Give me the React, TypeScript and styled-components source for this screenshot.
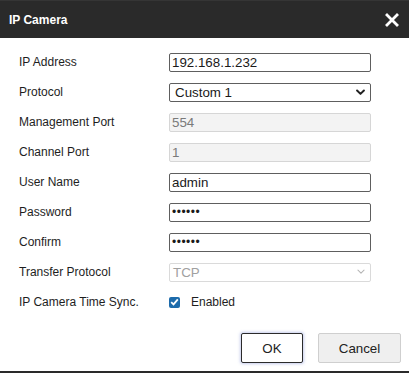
import styled, { createGlobalStyle } from "styled-components"

const GlobalStyle = createGlobalStyle`
  html, body {
    margin: 0;
    padding: 0;
    background: #ffffff;
  }
  body {
    font-family: "Liberation Sans", Arial, sans-serif;
  }
`

type Field =
  | { label: string; kind: "text"; value: string; disabled?: boolean }
  | { label: string; kind: "password"; value: string }
  | { label: string; kind: "select"; value: string; disabled?: boolean }

const fields: Field[] = [
  { label: "IP Address", kind: "text", value: "192.168.1.232" },
  { label: "Protocol", kind: "select", value: "Custom 1" },
  { label: "Management Port", kind: "text", value: "554", disabled: true },
  { label: "Channel Port", kind: "text", value: "1", disabled: true },
  { label: "User Name", kind: "text", value: "admin" },
  { label: "Password", kind: "password", value: "123456" },
  { label: "Confirm", kind: "password", value: "123456" },
  { label: "Transfer Protocol", kind: "select", value: "TCP", disabled: true },
]

const Chevron = ({ disabled }: { disabled?: boolean }) => (
  <svg width={disabled ? 8 : 9} height={disabled ? 6 : 7} viewBox="0 0 10 7">
    <path
      d="M1.2 1.2 L5 5 L8.8 1.2"
      fill="none"
      stroke={disabled ? "#b5b5b5" : "#222"}
      strokeWidth={disabled ? 1.3 : 2.2}
      strokeLinecap="round"
      strokeLinejoin="round"
    />
  </svg>
)

export default function App() {
  return (
    <>
      <GlobalStyle />
      <Dialog>
        <TitleBar>
          <Title>IP Camera</Title>
          <CloseIcon viewBox="0 0 14 14" aria-label="Close">
            <path d="M2 2 L12 12 M12 2 L2 12" stroke="#fff" strokeWidth="2.8" strokeLinecap="square" />
          </CloseIcon>
        </TitleBar>
        <Form>
          {fields.map((f) => (
            <Row key={f.label}>
              <Label>{f.label}</Label>
              {f.kind === "select" ? (
                <SelectBox $disabled={f.disabled}>
                  <SelectText $disabled={f.disabled}>{f.value}</SelectText>
                  <Chevron disabled={f.disabled} />
                </SelectBox>
              ) : (
                <TextInput
                  type={f.kind}
                  defaultValue={f.value}
                  disabled={f.kind === "text" ? f.disabled : false}
                  readOnly
                />
              )}
            </Row>
          ))}
          <Row>
            <Label>IP Camera Time Sync.</Label>
            <CheckWrap>
              <CheckBox>
                <svg width="9" height="8" viewBox="0 0 9 8">
                  <path d="M1.2 4.2 L3.5 6.4 L7.8 1.4" fill="none" stroke="#fff" strokeWidth="1.8" />
                </svg>
              </CheckBox>
              <CheckLabel>Enabled</CheckLabel>
            </CheckWrap>
          </Row>
        </Form>
        <Footer>
          <Button $primary>OK</Button>
          <Button>Cancel</Button>
        </Footer>
      </Dialog>
    </>
  )
}

const Dialog = styled.div`
  width: 409px;
  height: 373px;
  background: #ffffff;
  display: flex;
  flex-direction: column;
  box-sizing: border-box;
  border-bottom: 2px solid #2a2a2a;
`

const TitleBar = styled.div`
  height: 38px;
  background: #2a2a2a;
  display: flex;
  align-items: center;
  justify-content: space-between;
  padding: 0 10px 0 9px;
  border-top: 1px solid #353535;
  box-sizing: border-box;
`

const Title = styled.span`
  color: #ffffff;
  font-size: 12px;
  font-weight: bold;
`

const CloseIcon = styled.svg`
  width: 14px;
  height: 14px;
`

const Form = styled.div`
  padding: 9px 0 0 19px;
  display: flex;
  flex-direction: column;
`

const Row = styled.div`
  height: 30px;
  display: flex;
  align-items: center;
`

const Label = styled.span`
  width: 150px;
  font-size: 12px;
  color: #1e1e1e;
`

const TextInput = styled.input`
  width: 202px;
  height: 19px;
  box-sizing: border-box;
  margin: 0;
  padding: 0 2px;
  font-family: "Liberation Sans", Arial, sans-serif;
  font-size: 13.33px;
  color: #1a1a1a;
  border: 1px solid #5e5e5e;
  border-radius: 2px;
  background: #ffffff;
  outline: none;

  &[type="password"] {
    font-size: 12px;
    letter-spacing: 0.5px;
  }

  &:disabled {
    background: #f3f3f3;
    border-color: #d6d6d6;
    color: #7a7a7a;
  }
`

const SelectBox = styled.div<{ $disabled?: boolean }>`
  width: 202px;
  height: 19px;
  box-sizing: border-box;
  display: flex;
  align-items: center;
  justify-content: space-between;
  padding: 0 5px 0 ${(p) => (p.$disabled ? "3px" : "5px")};
  border: 1px solid ${(p) => (p.$disabled ? "#dadada" : "#5e5e5e")};
  border-radius: 2px;
  background: #ffffff;
`

const SelectText = styled.span<{ $disabled?: boolean }>`
  font-size: 13.33px;
  color: ${(p) => (p.$disabled ? "#a0a0a0" : "#1a1a1a")};
`

const CheckWrap = styled.div`
  display: flex;
  align-items: center;
  gap: 11px;
`

const CheckBox = styled.span`
  width: 11px;
  height: 11px;
  border-radius: 2px;
  background: #1d6bab;
  display: flex;
  align-items: center;
  justify-content: center;
`

const CheckLabel = styled.span`
  font-size: 12px;
  color: #1e1e1e;
`

const Footer = styled.div`
  display: flex;
  justify-content: flex-end;
  gap: 15px;
  padding: 16px 8px 0 0;
`

const Button = styled.button<{ $primary?: boolean }>`
  height: 30px;
  width: ${(p) => (p.$primary ? "62px" : "83px")};
  box-sizing: border-box;
  margin: 0;
  font-family: "Liberation Sans", Arial, sans-serif;
  font-size: 13.33px;
  color: #222;
  border-radius: 2px;
  background: ${(p) => (p.$primary ? "#ffffff" : "#efefef")};
  border: 1px solid ${(p) => (p.$primary ? "#2b2b2b" : "#cfcfcf")};
  box-shadow: ${(p) => (p.$primary ? "0 0 3px 1px rgba(90, 110, 200, 0.35)" : "none")};
`
